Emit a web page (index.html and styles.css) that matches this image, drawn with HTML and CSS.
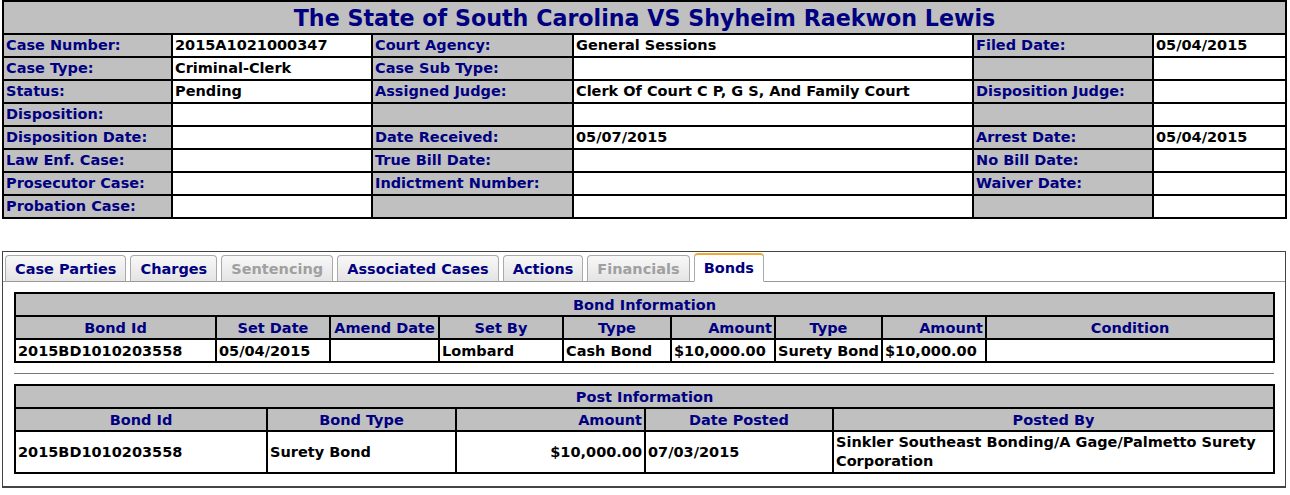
FILE: index.html
```html
<!DOCTYPE html>
<html>
  <head>
    <link rel="stylesheet" href="styles.css">
    <title>Case Details</title>
  </head>
  <body>
    <table class="case">
      <colgroup>
        <col style="width:169px"><col style="width:200px"><col style="width:201px">
        <col style="width:400px"><col style="width:180px"><col style="width:133px">
      </colgroup>
      <tr><td class="title" colspan="6">The State of South Carolina VS Shyheim Raekwon Lewis</td></tr>
      <tr>
        <td class="lbl">Case Number:</td><td>2015A1021000347</td>
        <td class="lbl">Court Agency:</td><td>General Sessions</td>
        <td class="lbl">Filed Date:</td><td>05/04/2015</td>
      </tr>
      <tr>
        <td class="lbl">Case Type:</td><td>Criminal-Clerk</td>
        <td class="lbl">Case Sub Type:</td><td></td>
        <td class="lbl"></td><td></td>
      </tr>
      <tr>
        <td class="lbl">Status:</td><td>Pending</td>
        <td class="lbl">Assigned Judge:</td><td>Clerk Of Court C P, G S, And Family Court</td>
        <td class="lbl">Disposition Judge:</td><td></td>
      </tr>
      <tr>
        <td class="lbl">Disposition:</td><td></td>
        <td class="lbl"></td><td></td>
        <td class="lbl"></td><td></td>
      </tr>
      <tr>
        <td class="lbl">Disposition Date:</td><td></td>
        <td class="lbl">Date Received:</td><td>05/07/2015</td>
        <td class="lbl">Arrest Date:</td><td>05/04/2015</td>
      </tr>
      <tr>
        <td class="lbl">Law Enf. Case:</td><td></td>
        <td class="lbl">True Bill Date:</td><td></td>
        <td class="lbl">No Bill Date:</td><td></td>
      </tr>
      <tr>
        <td class="lbl">Prosecutor Case:</td><td></td>
        <td class="lbl">Indictment Number:</td><td></td>
        <td class="lbl">Waiver Date:</td><td></td>
      </tr>
      <tr>
        <td class="lbl">Probation Case:</td><td></td>
        <td class="lbl"></td><td></td>
        <td class="lbl"></td><td></td>
      </tr>
    </table>

    <div class="tabbox">
      <ul class="tabs">
        <li>Case Parties</li>
        <li>Charges</li>
        <li class="off">Sentencing</li>
        <li>Associated Cases</li>
        <li>Actions</li>
        <li class="off">Financials</li>
        <li class="on">Bonds</li>
      </ul>
      <div class="panel">
        <table class="grid">
          <colgroup>
            <col style="width:201px"><col style="width:114px"><col style="width:109px">
            <col style="width:124px"><col style="width:108px"><col style="width:104px">
            <col style="width:107px"><col style="width:104px"><col style="width:288px">
          </colgroup>
          <tr><th class="cap" colspan="9">Bond Information</th></tr>
          <tr>
            <th>Bond Id</th><th>Set Date</th><th>Amend Date</th><th>Set By</th><th>Type</th>
            <th class="num">Amount</th><th>Type</th><th class="num">Amount</th><th>Condition</th>
          </tr>
          <tr>
            <td>2015BD1010203558</td><td>05/04/2015</td><td></td><td>Lombard</td><td>Cash Bond</td>
            <td>$10,000.00</td><td>Surety Bond</td><td>$10,000.00</td><td></td>
          </tr>
        </table>
        <hr>
        <table class="grid">
          <colgroup>
            <col style="width:252px"><col style="width:189px"><col style="width:189px">
            <col style="width:188px"><col style="width:441px">
          </colgroup>
          <tr><th class="cap" colspan="5">Post Information</th></tr>
          <tr>
            <th>Bond Id</th><th>Bond Type</th><th class="num">Amount</th><th>Date Posted</th><th>Posted By</th>
          </tr>
          <tr class="tall">
            <td>2015BD1010203558</td><td>Surety Bond</td><td class="num">$10,000.00</td><td>07/03/2015</td>
            <td>Sinkler Southeast Bonding/A Gage/Palmetto Surety Corporation</td>
          </tr>
        </table>
      </div>
    </div>
  </body>
</html>
```

FILE: styles.css
```css
body {
  margin: 0;
  padding: 0 4px 0 2px;
  font-family: "DejaVu Sans", Verdana, sans-serif;
  font-size: 14.5px;
  font-weight: bold;
  color: #000;
  background: #fff;
}

table {
  border-collapse: collapse;
  table-layout: fixed;
  font: inherit;
}

.case {
  width: 1285px;
  border: 2px solid #000;
}
.case td {
  height: 21px;
  padding: 0 2px;
  border: 2px solid #000;
  white-space: nowrap;
  overflow: hidden;
  line-height: 17px;
  vertical-align: middle;
}
.case td.lbl {
  background-color: #c0c0c0;
  color: #000080;
}
.case td.title {
  height: 31px;
  background-color: #c0c0c0;
  color: #000080;
  font-size: 22.2px;
  line-height: 26px;
  text-align: center;
}

.tabbox {
  margin-top: 32px;
  width: 1282px;
  border: 1px solid #444;
  border-bottom-width: 2px;
}
.tabs {
  list-style: none;
  margin: 0;
  padding: 3px 0 0 2px;
  display: flex;
  gap: 4px;
  border-bottom: 1px solid #999;
}
.tabs li {
  height: 25px;
  line-height: 27px;
  padding: 0 9px;
  margin-bottom: -1px;
  border: 1px solid #aaa;
  border-bottom-color: #999;
  border-radius: 4px 4px 0 0;
  background: linear-gradient(#f8f8f8, #e4e4e4);
  color: #000080;
}
.tabs li.off {
  color: #a0a0a0;
}
.tabs li.on {
  height: 26px;
  margin-top: -2px;
  border-top: 2px solid #f0a830;
  border-bottom-color: #fff;
  background: #fff;
}

.panel {
  padding: 10px 11px 12px;
}
.panel hr {
  margin: 10px 0;
  border: 0;
  border-top: 1px solid #777;
}

.grid {
  width: 1259px;
  border: 2px solid #000;
}
.grid th,
.grid td {
  height: 21px;
  padding: 0 2px;
  border: 2px solid #000;
  white-space: nowrap;
  line-height: 18px;
}
.grid th {
  background-color: #c0c0c0;
  color: #000080;
  text-align: center;
}
.grid th.cap {
  border-left: 0;
  border-right: 0;
}
.grid .num {
  text-align: right;
}
.grid tr.tall td {
  height: 40px;
  white-space: normal;
  line-height: 19px;
}
```
